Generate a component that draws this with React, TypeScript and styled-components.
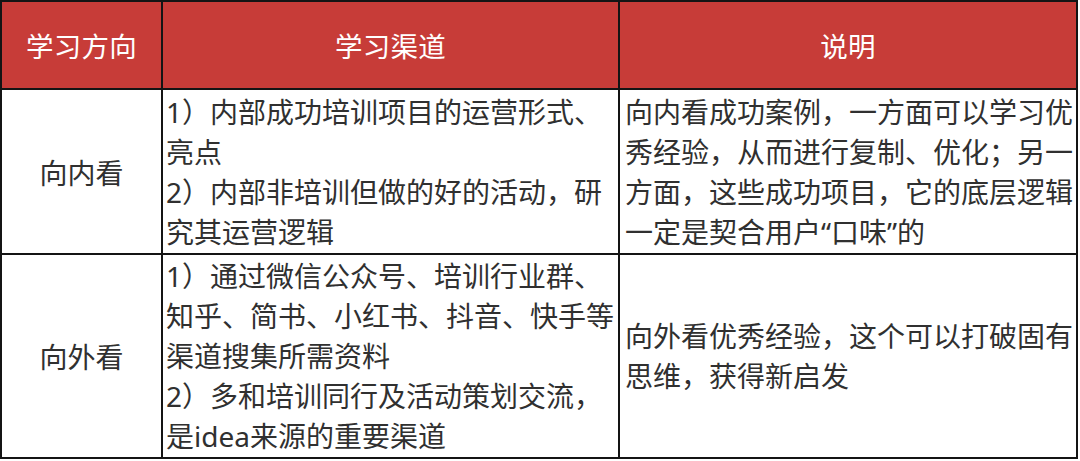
import React from 'react';
import styled, { createGlobalStyle } from 'styled-components';

const GlobalStyle = createGlobalStyle`
  html, body {
    margin: 0;
    padding: 0;
    background: #ffffff;
  }
  body {
    font-family: "Noto Sans", "Noto Sans CJK SC", sans-serif;
  }
`;

type Row = {
  direction: string;
  channels: string[];
  notes: string[];
};

const rows: Row[] = [
  {
    direction: '向内看',
    channels: [
      '1）内部成功培训项目的运营形式、',
      '亮点',
      '2）内部非培训但做的好的活动，研',
      '究其运营逻辑',
    ],
    notes: [
      '向内看成功案例，一方面可以学习优',
      '秀经验，从而进行复制、优化；另一',
      '方面，这些成功项目，它的底层逻辑',
      '一定是契合用户“口味”的',
    ],
  },
  {
    direction: '向外看',
    channels: [
      '1）通过微信公众号、培训行业群、',
      '知乎、简书、小红书、抖音、快手等',
      '渠道搜集所需资料',
      '2）多和培训同行及活动策划交流，',
      '是idea来源的重要渠道',
    ],
    notes: ['向外看优秀经验，这个可以打破固有', '思维，获得新启发'],
  },
];

export default function App(): JSX.Element {
  return (
    <>
      <GlobalStyle />
      <Table>
        <HeadCell>学习方向</HeadCell>
        <HeadCell>学习渠道</HeadCell>
        <HeadCell>说明</HeadCell>
        {rows.map((row) => (
          <React.Fragment key={row.direction}>
            <DirectionCell>{row.direction}</DirectionCell>
            <TextCell padLeft={3}>
              {row.channels.map((line, i) => (
                <Line key={`c-${i}`}>{line}</Line>
              ))}
            </TextCell>
            <TextCell padLeft={5}>
              {row.notes.map((line, i) => (
                <Line key={`n-${i}`}>{line}</Line>
              ))}
            </TextCell>
          </React.Fragment>
        ))}
      </Table>
    </>
  );
}

const Table = styled.div`
  width: 1078px;
  box-sizing: border-box;
  display: grid;
  grid-template-columns: 159px 455px 456px;
  grid-template-rows: 86px 163px 202px;
  gap: 2px;
  padding: 2px;
  background: #141414;
`;

const HeadCell = styled.div`
  display: flex;
  align-items: center;
  justify-content: center;
  background: #c73c38;
  color: #ffffff;
  font-size: 27.5px;
  letter-spacing: 0.2px;
`;

const DirectionCell = styled.div`
  display: flex;
  align-items: center;
  justify-content: center;
  background: #ffffff;
  color: #303030;
  font-size: 28px;
`;

const TextCell = styled.div<{ padLeft: number }>`
  display: flex;
  flex-direction: column;
  justify-content: center;
  background: #ffffff;
  color: #303030;
  font-size: 28px;
  line-height: 40px;
  padding-left: ${(props) => props.padLeft}px;
  overflow: hidden;
`;

const Line = styled.div`
  white-space: nowrap;
`;
